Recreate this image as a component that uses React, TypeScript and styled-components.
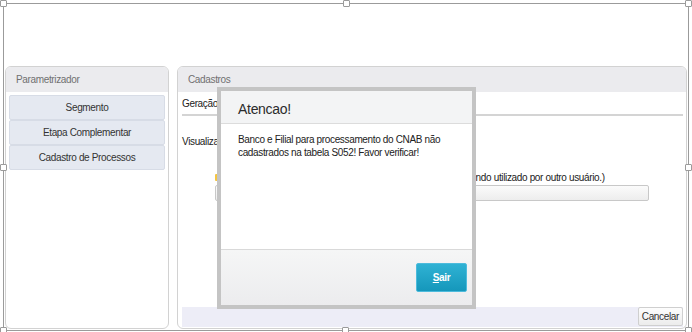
import { FunctionComponent } from "react";
import styled, { createGlobalStyle } from "styled-components";

const GlobalStyle = createGlobalStyle`
  html, body {
    margin: 0;
    padding: 0;
    background: #ffffff;
  }
  body {
    font-family: "Liberation Sans", Arial, sans-serif;
    color: #333333;
    letter-spacing: -0.35px;
  }
`;

const Stage = styled.div`
  position: relative;
  width: 692px;
  height: 332px;
  overflow: hidden;
  background: #ffffff;
`;

const Frame = styled.div`
  box-sizing: border-box;
  margin: 3px 0 0 3px;
  width: 686px;
  height: 328px;
  border: 1px solid #9b9b9b;
  padding: 62px 1px 1px 1px;
  display: flex;
  flex-direction: row;
  gap: 8px;
`;

const Handle = styled.div<{ $x: number; $y: number }>`
  position: absolute;
  left: ${(p) => p.$x}px;
  top: ${(p) => p.$y}px;
  width: 7px;
  height: 7px;
  box-sizing: border-box;
  border: 1px solid #9b9b9b;
  border-radius: 1px;
  background: #ffffff;
`;

const Panel = styled.div<{ $width?: number }>`
  box-sizing: border-box;
  ${(p) => (p.$width ? `width: ${p.$width}px;` : "flex: 1;")}
  border: 1px solid #d2d2d2;
  border-radius: 6px;
  overflow: hidden;
  display: flex;
  flex-direction: column;
`;

const PanelHeader = styled.div`
  height: 25px;
  flex-shrink: 0;
  background: #ebebee;
  color: #707070;
  font-size: 10px;
  display: flex;
  align-items: center;
  padding: 0 10px;
`;

const MenuList = styled.div`
  display: flex;
  flex-direction: column;
  padding: 3px;
`;

const MenuButton = styled.div`
  box-sizing: border-box;
  height: 25px;
  background: #e5e9f1;
  border: 1px solid #d7dce6;
  border-radius: 2px;
  color: #333333;
  font-size: 10px;
  display: flex;
  align-items: center;
  justify-content: center;
`;

const PanelBody = styled.div`
  flex: 1;
  display: flex;
  flex-direction: column;
  padding: 5px 3px 0 4px;
`;

const TabTitle = styled.div`
  font-size: 10px;
  color: #222222;
  line-height: 13px;
  padding-bottom: 4px;
  border-bottom: 2px solid #d4d4d4;
`;

const Label = styled.div`
  font-size: 10px;
  color: #222222;
  line-height: 13px;
  margin-top: 19px;
`;

const LockRow = styled.div`
  display: flex;
  flex-direction: row;
  align-items: center;
  margin: 23px 0 0 33px;
  font-size: 10px;
  color: #222222;
  line-height: 13px;
  white-space: nowrap;
`;

const WarnIcon = styled.span`
  width: 10px;
  height: 7px;
  flex-shrink: 0;
  background: #f4c542;
  border-radius: 1px;
`;

const LockText = styled.span`
  margin-left: 124px;
`;

const FileInput = styled.div`
  box-sizing: border-box;
  margin: 1px 0 0 33px;
  width: 434px;
  height: 16px;
  border: 1px solid #c8c8c8;
  border-radius: 2px;
  background: linear-gradient(#fbfbfb, #ededed);
`;

const Spacer = styled.div`
  flex: 1;
`;

const FooterBar = styled.div`
  height: 20px;
  margin: 0 3px 1px 4px;
  background: #ededf7;
  display: flex;
  justify-content: flex-end;
  align-items: flex-start;
`;

const PlainButton = styled.div`
  box-sizing: border-box;
  height: 19px;
  padding: 0 3px;
  border: 1px solid #cfcfcf;
  border-radius: 2px;
  background: linear-gradient(#fdfdfd, #ececec);
  color: #333333;
  font-size: 10px;
  display: flex;
  align-items: center;
`;

const Dialog = styled.div`
  position: absolute;
  left: 217px;
  top: 87px;
  width: 259px;
  height: 222px;
  box-sizing: border-box;
  border: 4px solid #c4c4c4;
  background: #ffffff;
  display: flex;
  flex-direction: column;
`;

const DialogHeader = styled.div`
  height: 33px;
  box-sizing: border-box;
  flex-shrink: 0;
  background: #f3f4f5;
  border-bottom: 1px solid #dcdcdc;
  padding: 4px 0 0 17px;
  display: flex;
  align-items: center;
  font-size: 14px;
  letter-spacing: -0.3px;
  color: #2b2b2b;
`;

const DialogBody = styled.div`
  flex: 1;
  padding: 9px 17px 0 17px;
  font-size: 10px;
  line-height: 13px;
  color: #222222;
`;

const DialogFooter = styled.div`
  height: 56px;
  box-sizing: border-box;
  flex-shrink: 0;
  border-top: 1px solid #d9d9d9;
  background: linear-gradient(#f5f6f6, #ececee);
  display: flex;
  align-items: center;
  justify-content: flex-end;
  padding-right: 5px;
`;

const PrimaryButton = styled.div`
  box-sizing: border-box;
  width: 51px;
  height: 29px;
  border: 1px solid #4cbbdc;
  border-radius: 2px;
  background: linear-gradient(#2fb2d4, #1597bb);
  color: #ffffff;
  font-size: 10px;
  font-weight: bold;
  display: flex;
  align-items: center;
  justify-content: center;
  u {
    text-decoration: underline;
  }
`;

const handles = [
  [0, 0],
  [343, 0],
  [685, 0],
  [0, 164],
  [685, 164],
  [0, 327],
  [342, 327],
  [685, 327],
];

const App: FunctionComponent = () => {
  return (
    <Stage>
      <GlobalStyle />
      <Frame>
        <Panel $width={164}>
          <PanelHeader>Parametrizador</PanelHeader>
          <MenuList>
            <MenuButton>Segmento</MenuButton>
            <MenuButton>Etapa Complementar</MenuButton>
            <MenuButton>Cadastro de Processos</MenuButton>
          </MenuList>
        </Panel>
        <Panel>
          <PanelHeader>Cadastros</PanelHeader>
          <PanelBody>
            <TabTitle>Geração de Arquivos</TabTitle>
            <Label>Visualizar arquivos gerados</Label>
            <LockRow>
              <WarnIcon />
              <LockText>Arquivo bloqueado (Arquivo sendo utilizado por outro usuário.)</LockText>
            </LockRow>
            <FileInput />
            <Spacer />
          </PanelBody>
          <FooterBar>
            <PlainButton>Cancelar</PlainButton>
          </FooterBar>
        </Panel>
      </Frame>
      {handles.map(([x, y], i) => (
        <Handle key={i} $x={x} $y={y} />
      ))}
      <Dialog>
        <DialogHeader>Atencao!</DialogHeader>
        <DialogBody>
          Banco e Filial para processamento do CNAB não cadastrados na tabela S052! Favor verificar!
        </DialogBody>
        <DialogFooter>
          <PrimaryButton>
            <span>
              <u>S</u>air
            </span>
          </PrimaryButton>
        </DialogFooter>
      </Dialog>
    </Stage>
  );
};

export default App;
